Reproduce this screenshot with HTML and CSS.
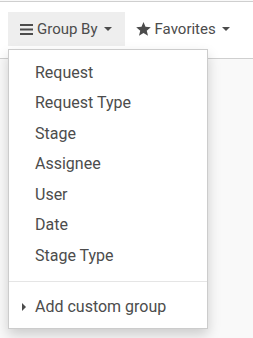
FILE: index.html
```html
<!DOCTYPE html>
<html lang="en">
<head>
    <meta charset="UTF-8">
    <meta name="viewport" content="width=device-width, initial-scale=1.0">
    <title>Group By</title>
    <link rel="stylesheet" href="styles.css">
</head>
<body>
    <!-- Control panel with search options -->
    <div class="control-panel">
        <div class="search-options">
            <div class="option-group">
                <button class="option-btn active">
                    <svg class="icon-bars" width="13" height="11" viewBox="0 0 13 11">
                        <rect x="0" y="0" width="13" height="2"/>
                        <rect x="0" y="4.5" width="13" height="2"/>
                        <rect x="0" y="9" width="13" height="2"/>
                    </svg>
                    <span>Group By</span>
                    <span class="caret-down"></span>
                </button>

                <!-- Group by dropdown -->
                <div class="dropdown-menu">
                    <a class="dropdown-item">Request</a>
                    <a class="dropdown-item">Request Type</a>
                    <a class="dropdown-item">Stage</a>
                    <a class="dropdown-item">Assignee</a>
                    <a class="dropdown-item">User</a>
                    <a class="dropdown-item">Date</a>
                    <a class="dropdown-item">Stage Type</a>
                    <div class="dropdown-divider"></div>
                    <a class="dropdown-item add-custom">
                        <span class="caret-right"></span>
                        Add custom group
                    </a>
                </div>
            </div>

            <button class="option-btn">
                <svg class="icon-star" width="15" height="14" viewBox="0.5 0 23 22">
                    <polygon points="12,0 15.1,7.6 23.5,8.3 17.1,13.7 19.1,21.8 12,17.4 4.9,21.8 6.9,13.7 0.5,8.3 8.9,7.6"/>
                </svg>
                <span>Favorites</span>
                <span class="caret-down"></span>
            </button>
        </div>
    </div>

    <div class="content"></div>
</body>
</html>
```

FILE: styles.css
```css
body {
    margin: 0;
    padding: 0;
    font-family: Roboto, 'Noto Sans', sans-serif;
    background-color: #f9f9f9;
    color: #4c4c4c;
    height: 100vh;
    overflow: hidden;
}

/* Control panel */
.control-panel {
    margin-top: 1px;
    background: white;
    border-top: 1px solid #cfcfcf;
    border-bottom: 1px solid #cfcfcf;
    padding: 10px 8px 12px;
}

.search-options {
    display: flex;
}

.option-group {
    position: relative;
}

.option-btn {
    display: flex;
    align-items: center;
    height: 34px;
    padding: 0 13px 0 12px;
    border: none;
    background: none;
    font-family: inherit;
    font-size: 15px;
    color: #4c4c4c;
    cursor: pointer;
}

.option-btn.active {
    background-color: #eeeeee;
}

.option-btn span {
    margin-left: 4px;
}

.icon-star {
    margin-left: -1px;
}

.icon-bars,
.icon-star {
    fill: #4c4c4c;
}

.caret-down {
    display: inline-block;
    width: 0;
    height: 0;
    margin-left: 6px !important;
    border-top: 4px solid #4c4c4c;
    border-left: 4px solid transparent;
    border-right: 4px solid transparent;
}

/* Dropdown */
.dropdown-menu {
    position: absolute;
    top: 37px;
    left: 0;
    width: 198px;
    padding: 7px 0 6px;
    background: white;
    border: 1px solid rgba(0, 0, 0, 0.2);
    box-shadow: 0 6px 12px rgba(0, 0, 0, 0.175);
    z-index: 10;
}

.dropdown-item {
    display: flex;
    align-items: center;
    height: 30.5px;
    padding-left: 26px;
    font-size: 16px;
    color: #4c4c4c;
    cursor: pointer;
}

.dropdown-divider {
    height: 0;
    margin: 10px 0 10px;
    border-top: 1px solid #e5e5e5;
}

.add-custom {
    position: relative;
}

.caret-right {
    position: absolute;
    left: 13px;
    top: 11px;
    width: 0;
    height: 0;
    border-left: 4px solid #4c4c4c;
    border-top: 4px solid transparent;
    border-bottom: 4px solid transparent;
}
```
